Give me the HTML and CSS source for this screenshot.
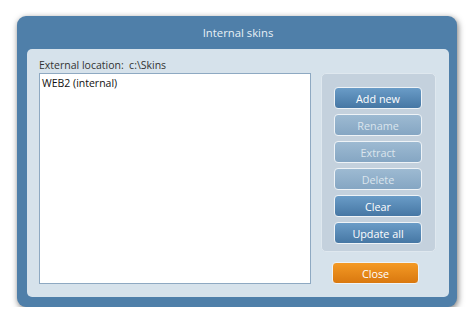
FILE: index.html
```html
<!DOCTYPE html>
<html lang="en">
<head>
    <meta charset="UTF-8">
    <title>Internal skins</title>
    <link rel="stylesheet" href="styles.css">
</head>
<body>
    <div class="window">
        <div class="title">Internal skins</div>
        <div class="panel">
            <div class="left">
                <div class="location">External location:&nbsp;&nbsp;c:\Skins</div>
                <div class="list">
                    <div class="list-item">WEB2 (internal)</div>
                </div>
            </div>
            <div class="right">
                <div class="group">
                    <button class="btn">Add new</button>
                    <button class="btn" disabled>Rename</button>
                    <button class="btn" disabled>Extract</button>
                    <button class="btn" disabled>Delete</button>
                    <button class="btn">Clear</button>
                    <button class="btn">Update all</button>
                </div>
                <button class="btn btn-close">Close</button>
            </div>
        </div>
    </div>
</body>
</html>
```

FILE: styles.css
```css
body {
    margin: 0;
    background: #ffffff;
    font-family: "Open Sans", "DejaVu Sans", sans-serif;
    font-size: 10.5px;
}
.window {
    margin: 16px 0 0 17px;
    width: 440px;
    height: 291px;
    box-sizing: border-box;
    padding: 0 8px 10px 10px;
    background: #4f7fa9;
    border-radius: 9px;
    box-shadow: 1px 2px 6px rgba(0, 0, 0, 0.55);
    display: flex;
    flex-direction: column;
}
.title {
    height: 33px;
    line-height: 33px;
    text-align: center;
    color: #e8f0f6;
    font-size: 11.3px;
}
.panel {
    flex: 1;
    background: #d6e2eb;
    border-radius: 5px;
    padding: 9px 13px 13px 12px;
    display: flex;
    gap: 10px;
}
.left {
    width: 272px;
    display: flex;
    flex-direction: column;
}
.location {
    height: 15px;
    line-height: 15px;
    color: #333;
}
.list {
    flex: 1;
    background: #ffffff;
    border: 1px solid #8ea9c2;
    padding: 2px 2px;
}
.list-item {
    color: #111;
    line-height: 14px;
}
.right {
    width: 115px;
    padding-top: 15px;
}
.group {
    box-sizing: border-box;
    height: 179px;
    background: #c4d1dd;
    border: 1px solid #dfe8ef;
    border-radius: 5px;
    padding: 13px 13px 0 12px;
    display: flex;
    flex-direction: column;
    gap: 5px;
}
.btn {
    width: 88px;
    height: 22px;
    padding: 0;
    border: 1px solid #eef3f7;
    border-radius: 4px;
    background: linear-gradient(#6a9cc7, #4677a4);
    color: #ffffff;
    font-family: inherit;
    font-size: 10.8px;
}
.btn:disabled {
    background: linear-gradient(#9dbad2, #85a6c3);
    color: #dbe5ed;
}
.btn-close {
    margin: 10px 0 0 11px;
    width: 87px;
    background: linear-gradient(#f49a25, #d9780f);
}
```
